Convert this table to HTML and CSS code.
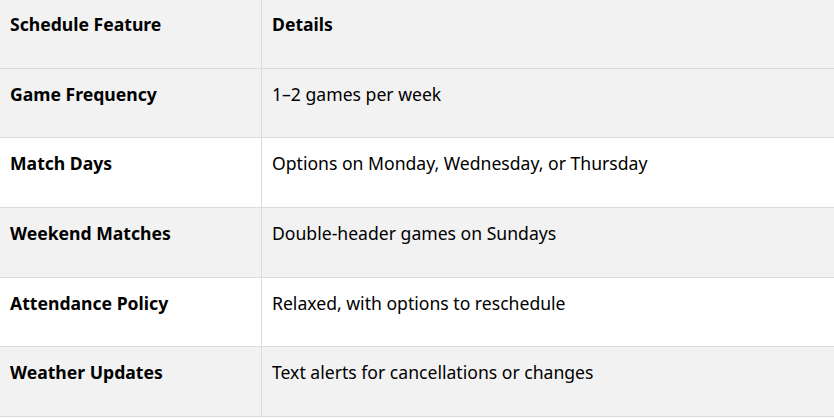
FILE: index.html
```html
<!DOCTYPE html>
<html>
<head>
<meta charset="utf-8">
<link rel="stylesheet" href="styles.css">
</head>
<body>
<table class="schedule">
  <thead>
    <tr class="shade head"><th class="feature">Schedule Feature</th><th class="detail">Details</th></tr>
  </thead>
  <tbody>
    <tr class="shade"><td class="feature">Game Frequency</td><td class="detail">1–2 games per week</td></tr>
    <tr><td class="feature">Match Days</td><td class="detail">Options on Monday, Wednesday, or Thursday</td></tr>
    <tr class="shade"><td class="feature">Weekend Matches</td><td class="detail">Double-header games on Sundays</td></tr>
    <tr><td class="feature">Attendance Policy</td><td class="detail">Relaxed, with options to reschedule</td></tr>
    <tr class="shade"><td class="feature">Weather Updates</td><td class="detail">Text alerts for cancellations or changes</td></tr>
  </tbody>
</table>
</body>
</html>
```
FILE: styles.css
```css
html, body {
  margin: 0;
  padding: 0;
  background: #ffffff;
}
body {
  font-family: "Noto Sans", "Open Sans", sans-serif;
  font-size: 17.6px;
  color: #000;
}
.schedule {
  width: 834px;
  border-collapse: collapse;
  table-layout: fixed;
}
.schedule tr {
  height: 69.6px;
  border-bottom: 1px solid #dcdcdc;
}
.schedule tr.head {
  height: 68.4px;
}
.schedule tr.shade {
  background: #f2f2f2;
}
.schedule th,
.schedule td {
  vertical-align: top;
  text-align: left;
  padding: 11px 10px;
  line-height: 26px;
}
.schedule td {
  padding-top: 12px;
}
.schedule th {
  font-weight: 700;
}
.schedule .feature {
  width: 241px;
  font-weight: 700;
  border-right: 1px solid #dcdcdc;
}
.schedule .detail {
  font-weight: 400;
}
.schedule th.detail {
  font-weight: 700;
}
```
